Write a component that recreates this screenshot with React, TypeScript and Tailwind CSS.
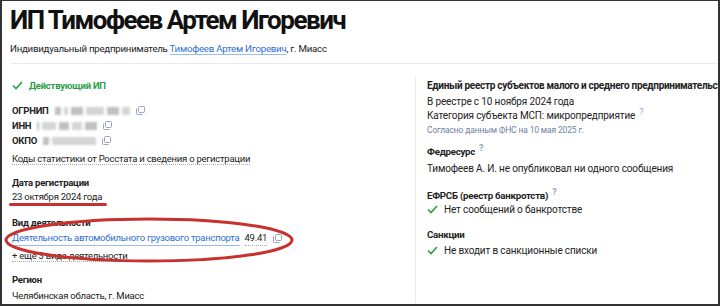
import React from 'react';

const font = { fontFamily: 'Roboto, "Noto Sans", sans-serif' };

function CopyIcon() {
  return (
    <svg width="9" height="9" viewBox="0 0 9 9" className="inline-block ml-1.5 shrink-0" fill="none" stroke="#9aa6bd" strokeWidth="1">
      <rect x="2.5" y="0.5" width="6" height="6" rx="1" />
      <path d="M0.5 2.5v5a1 1 0 0 0 1 1h5" />
    </svg>
  );
}

function Check() {
  return (
    <svg width="11" height="9" viewBox="0 0 11 9" fill="none" stroke="#2a9d49" strokeWidth="1.6" className="mr-1.5 shrink-0">
      <path d="M1 4.5l3 3L10 1" />
    </svg>
  );
}

function Blur({ w }: { w: number[] }) {
  return (
    <span className="inline-flex items-center gap-[3px] ml-1.5 blur-[1px]">
      {w.map((x, i) => (
        <span key={i} className="inline-block h-[8px] bg-[#b9b9b9]" style={{ width: x, opacity: i % 2 ? 0.6 : 0.9 }} />
      ))}
    </span>
  );
}

function Q() {
  return <sup className="text-[#9aa6bd] text-[9px] ml-1">?</sup>;
}

export default function App() {
  return (
    <div className="relative w-[720px] h-[306px] overflow-hidden bg-white border-x-2 border-b-2 border-t border-[#333] text-[#222]" style={font}>
      <div className="pl-[8px] pt-[1px]">
        <h1 className="text-[26px] font-bold leading-[37px] tracking-[-1.5px] text-[#111]">ИП Тимофеев Артем Игоревич</h1>
        <p className="text-[9.7px] mt-[3px] leading-[14px] tracking-[-0.25px]">
          Индивидуальный предприниматель{' '}
          <span className="text-[#2f6fd6] border-b border-[#9bbcee]">Тимофеев Артем Игоревич</span>, г. Миасс
        </p>
      </div>
      <div className="ml-[9px] mt-[7px] border-t border-[#e8eaef]" />

      <div className="flex mt-[13px] leading-[15px]">
        <div className="w-[413px] shrink-0 pl-[10px] text-[9.5px] tracking-[-0.25px]">
          <div className="flex items-center text-[#2a9d49] font-bold pt-[1px]">
            <Check />Действующий ИП
          </div>

          <div className="mt-[10px] flex flex-col font-bold">
            <div className="flex items-center">ОГРНИП<Blur w={[6, 4, 12, 18, 12, 8]} /><CopyIcon /></div>
            <div className="flex items-center">ИНН<Blur w={[2, 14, 10, 10, 12]} /><CopyIcon /></div>
            <div className="flex items-center">ОКПО<Blur w={[6, 44]} /><CopyIcon /></div>
          </div>
          <div className="mt-[3px]">
            <span className="border-b border-dotted border-[#aaa]">Коды статистики от Росстата</span>{' '}
            <span className="border-b border-dotted border-[#aaa]">и сведения о регистрации</span>
          </div>

          <div className="mt-[9px] font-bold">Дата регистрации</div>
          <div className="-mt-[1px]">23 октября 2024 года</div>

          <div className="mt-[11px] font-bold">Вид деятельности</div>
          <div className="flex items-center">
            <span className="text-[#2f6fd6] border-b border-[#9bbcee]">Деятельность автомобильного грузового транспорта</span>
            <span className="ml-[5px] border-b border-dotted border-[#aaa]">49.41</span>
            <CopyIcon />
          </div>
          <div className="mt-[2px]">
            <span className="border-b border-dotted border-[#aaa]">+ еще 3 вида деятельности</span>
          </div>

          <div className="mt-[9px] font-bold">Регион</div>
          <div className="mt-[1px]">Челябинская область, г. Миасс</div>
        </div>

        <div className="flex-1 min-w-0 border-l border-[#e8eaef] pl-[11px] pt-[1px] whitespace-nowrap text-[10px] tracking-[-0.15px]">
          <div className="font-bold text-[10px] tracking-[-0.3px]">Единый реестр субъектов малого и среднего предпринимательства</div>
          <div className="mt-[1px]">В реестре с 10 ноября 2024 года</div>
          <div className="-mt-[1px]">Категория субъекта МСП: микропредприятие<Q /></div>
          <div className="text-[8.5px] text-[#6c7fa6]">Согласно данным ФНС на 10 мая 2025 г.</div>

          <div className="mt-[6px] font-bold text-[9.7px] tracking-[-0.25px]">Федресурс<Q /></div>
          <div className="mt-[2px]">Тимофеев А. И. не опубликовал ни одного сообщения</div>

          <div className="mt-[12px] font-bold text-[9.7px] tracking-[-0.25px]">ЕФРСБ (реестр банкротств)<Q /></div>
          <div className="-mt-[1px] flex items-center"><Check />Нет сообщений о банкротстве</div>

          <div className="mt-[10px] font-bold text-[9.7px] tracking-[-0.25px]">Санкции</div>
          <div className="mt-[1px] flex items-center"><Check />Не входит в санкционные списки</div>
        </div>
      </div>

      <div className="absolute left-[7px] top-[202px] w-[98px] h-[3px] rounded-full bg-[#c8312d]" />
      <svg className="absolute left-0 top-[214px]" width="300" height="52" viewBox="0 0 300 52" fill="none">
        <ellipse cx="147" cy="25" rx="143" ry="21" stroke="#c8312d" strokeWidth="3" />
      </svg>
    </div>
  );
}
